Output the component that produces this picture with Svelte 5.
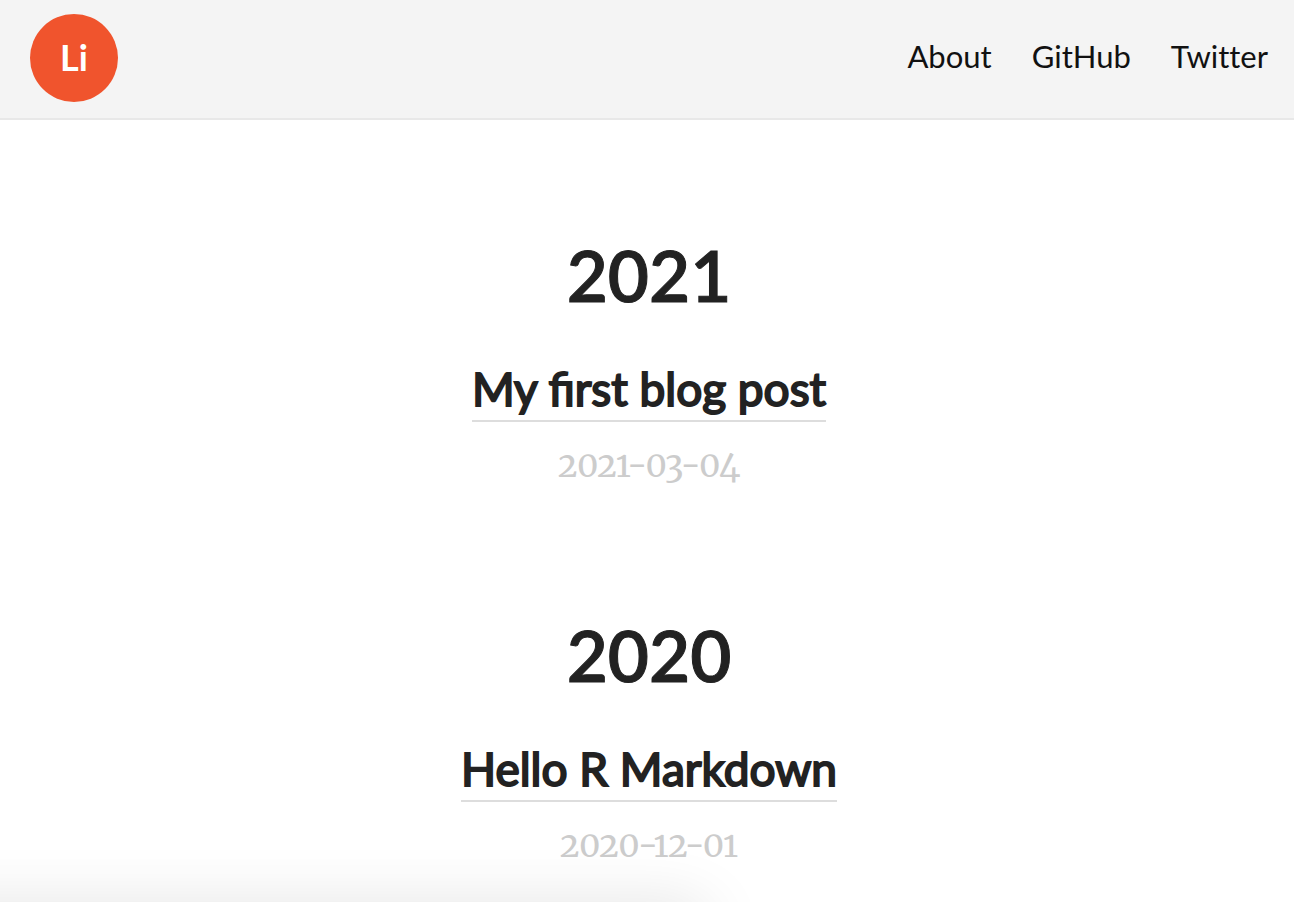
<script>
  const links = ['About', 'GitHub', 'Twitter'];
  const groups = [
    { year: '2021', title: 'My first blog post', date: '2021-03-04' },
    { year: '2020', title: 'Hello R Markdown', date: '2020-12-01' }
  ];
</script>

<div class="page">
  <header>
    <a class="logo" href="#home">Li</a>
    <nav>
      {#each links as link}
        <a href="#{link.toLowerCase()}">{link}</a>
      {/each}
    </nav>
  </header>
  <main>
    {#each groups as group}
      <section>
        <h1>{group.year}</h1>
        <article>
          <h2><a href="#post-{group.year}">{group.title}</a></h2>
          <time datetime={group.date}>{group.date}</time>
        </article>
      </section>
    {/each}
  </main>
  <div class="glow"></div>
</div>

<style>
  :global(body) {
    margin: 0;
    background: #fff;
  }
  .page {
    position: relative;
    height: 100vh;
    overflow: hidden;
    font-family: Lato, sans-serif;
    color: #222;
  }
  header {
    display: flex;
    align-items: center;
    justify-content: space-between;
    padding: 14px 26px 16px 30px;
    background: #f4f4f4;
    border-bottom: 2px solid #e8e8e8;
  }
  a {
    color: inherit;
    text-decoration: none;
  }
  .logo {
    display: grid;
    place-items: center;
    width: 88px;
    height: 86px;
    padding-bottom: 2px;
    border-radius: 50%;
    background: #f0542d;
    color: #fff;
    font-size: 36px;
    font-weight: 700;
  }
  nav {
    display: flex;
    gap: 40px;
    padding-bottom: 4px;
    color: #111;
    font-size: 31px;
    line-height: 40px;
    font-variant-ligatures: none;
  }
  main {
    display: flex;
    flex-direction: column;
    gap: 126px;
    padding: 115px 0 0 4px;
    text-align: center;
  }
  h1 {
    margin: 0 0 43px;
    font-size: 71px;
    line-height: 80px;
    font-weight: 600;
    -webkit-text-stroke: 1px currentColor;
  }
  h2 {
    margin: 0 0 19px;
    font-size: 46px;
    line-height: 62px;
    font-weight: 400;
    -webkit-text-stroke: 2px currentColor;
  }
  h2 a {
    display: inline-block;
    border-bottom: 2px solid #ddd;
  }
  time {
    display: block;
    font-family: Merriweather, "Noto Serif", "DejaVu Serif", serif;
    font-size: 34px;
    font-variant-numeric: oldstyle-nums;
    line-height: 48px;
    color: #ccc;
  }
  .glow {
    position: absolute;
    left: -80px;
    right: 45%;
    bottom: -42px;
    height: 40px;
    border-radius: 0 30px 0 0;
    box-shadow: 0 0 60px rgb(0 0 0 / 13%);
    pointer-events: none;
  }
</style>
